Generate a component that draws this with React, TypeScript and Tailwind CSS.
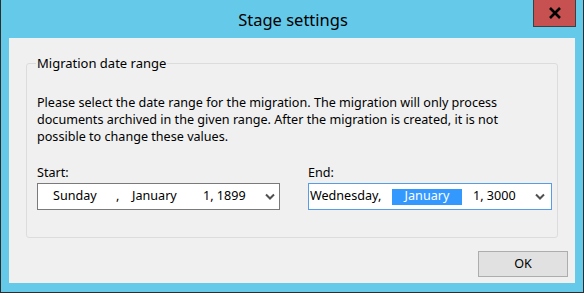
import React from 'react';

const font = { fontFamily: '"Noto Sans", "Open Sans", sans-serif' };

const Chevron: React.FC = () => (
  <svg width="10" height="7" viewBox="0 0 10 7" className="shrink-0">
    <polyline points="1,1.5 5,5.5 9,1.5" fill="none" stroke="#505050" strokeWidth="2" />
  </svg>
);

export default function App() {
  return (
    <div
      className="w-[584px] h-[293px] bg-[#65c9e9] border border-[#2d2d2d] border-t-0 flex flex-col text-black"
      style={font}
    >
      {/* Title bar */}
      <div className="relative h-[38px] shrink-0 flex items-center justify-center">
        <span className="text-[16.5px] leading-none mt-[3px] pl-[2px]">Stage settings</span>
        <div className="absolute right-[7px] top-0 w-[43px] h-[27px] bg-[#c75050] border border-t-0 border-[#3f3f3f] flex items-center justify-center">
          <svg width="14" height="12" viewBox="0 0 14 12">
            <path d="M2 1 L12 11 M12 1 L2 11" stroke="#000" strokeWidth="2.6" />
          </svg>
        </div>
      </div>

      {/* Client area */}
      <div className="mx-[8px] h-[245px] bg-[#f0f0f0] flex flex-col text-[12.6px]">
        <fieldset className="mt-[18px] mx-[17px] h-[182px] border border-[#dcdcdc] rounded-[3px] pl-[10px] pr-[5px]">
          <legend className="px-[1px] -ml-[1px] leading-[15px] text-[13px]">Migration date range</legend>
          <p className="mt-[23px] leading-[17px] w-[505px]">
            Please select the date range for the migration. The migration will only process documents archived in the given range. After the migration is created, it is not possible to change these values.
          </p>

          <div className="mt-[19px] flex gap-[28px]">
            <div className="flex flex-col gap-[2px]">
              <span className="leading-[17px]">Start:</span>
              <div className="w-[243px] h-[27px] bg-white border border-[#7a7a7a] flex items-center pr-[4px]">
                <span className="pl-[15px] w-[78px]">Sunday</span>
                <span className="w-[16px]">,</span>
                <span className="w-[71px]">January</span>
                <span className="flex-1">1, 1899</span>
                <Chevron />
              </div>
            </div>
            <div className="flex flex-col gap-[2px]">
              <span className="leading-[17px]">End:</span>
              <div className="w-[244px] h-[27px] bg-white border border-[#569de5] flex items-center pr-[6px]">
                <span className="pl-[1px] w-[83px]">Wednesday,</span>
                <span className="w-[70px] h-[16px] bg-[#3399ff] text-white flex items-center justify-center">January</span>
                <span className="pl-[11px] flex-1">1, 3000</span>
                <Chevron />
              </div>
            </div>
          </div>
        </fieldset>

        <div className="flex-1 flex justify-end items-end pr-[7px] pb-[6px]">
          <div className="w-[90px] h-[26px] bg-[#e1e1e1] border border-[#adadad] flex items-center justify-center">
            OK
          </div>
        </div>
      </div>
      <div className="flex-1" />
    </div>
  );
}
